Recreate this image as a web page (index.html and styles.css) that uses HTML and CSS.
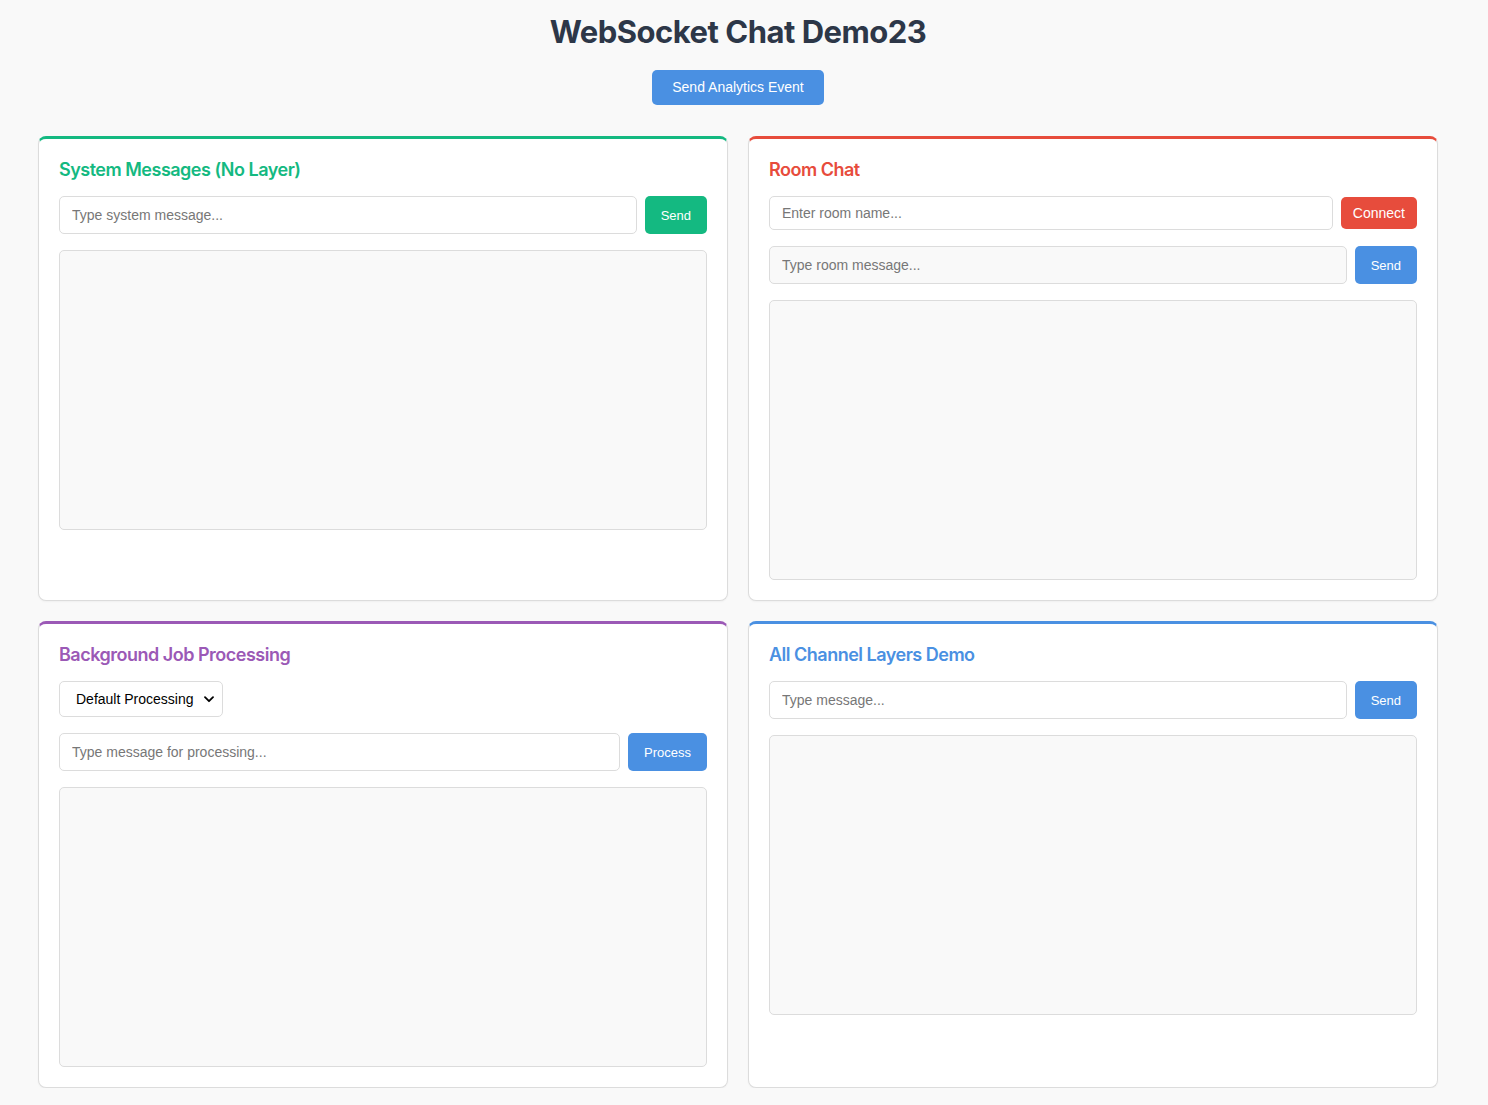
FILE: index.html
```html
<!DOCTYPE html>
<html>
<head>
<meta charset="utf-8">
<title>WebSocket Chat Demo23</title>
<link rel="stylesheet" href="styles.css">
</head>
<body>
<div class="page">
  <h1 class="title">WebSocket Chat Demo23</h1>
  <div class="top-actions">
    <button class="btn btn-blue btn-analytics">Send Analytics Event</button>
  </div>
  <div class="grid">
    <section class="card card-green">
      <h3 class="card-title">System Messages (No Layer)</h3>
      <div class="row">
        <input class="field" type="text" placeholder="Type system message...">
        <button class="btn btn-green btn-sm">Send</button>
      </div>
      <div class="messages"></div>
    </section>

    <section class="card card-red">
      <h3 class="card-title">Room Chat</h3>
      <div class="row row-center">
        <input class="field field-compact" type="text" placeholder="Enter room name...">
        <button class="btn btn-red btn-connect">Connect</button>
      </div>
      <div class="row">
        <input class="field field-disabled" type="text" placeholder="Type room message..." disabled>
        <button class="btn btn-blue btn-sm">Send</button>
      </div>
      <div class="messages"></div>
    </section>

    <section class="card card-purple">
      <h3 class="card-title">Background Job Processing</h3>
      <div class="select-row">
        <span class="select-wrap">
          <select class="select">
            <option>Default Processing</option>
          </select>
          <svg class="chevron" width="10" height="7" viewBox="0 0 10 7"><path d="M1 1.2 L5 5.2 L9 1.2" fill="none" stroke="#000" stroke-width="1.8" stroke-linecap="round" stroke-linejoin="round"/></svg>
        </span>
      </div>
      <div class="row">
        <input class="field" type="text" placeholder="Type message for processing...">
        <button class="btn btn-blue btn-sm">Process</button>
      </div>
      <div class="messages"></div>
    </section>

    <section class="card card-blue">
      <h3 class="card-title">All Channel Layers Demo</h3>
      <div class="row">
        <input class="field" type="text" placeholder="Type message...">
        <button class="btn btn-blue btn-sm">Send</button>
      </div>
      <div class="messages"></div>
    </section>
  </div>
</div>
</body>
</html>
```

FILE: styles.css
```css
* { box-sizing: border-box; }

html, body {
  margin: 0;
  padding: 0;
  background: #f9f9f9;
}

body {
  font-family: Inter, "Liberation Sans", Arial, sans-serif;
  color: #2d3748;
}

.page {
  width: 1400px;
  margin-left: 38px;
  padding-top: 12px;
}

.title {
  margin: 0;
  font-size: 31px;
  line-height: 40px;
  font-weight: 700;
  letter-spacing: -0.5px;
  text-align: center;
  color: #2d3748;
}

.top-actions {
  display: flex;
  justify-content: center;
  margin-top: 18px;
  margin-bottom: 31px;
}

.btn {
  border: none;
  border-radius: 5px;
  color: #fff;
  font-family: "Liberation Sans", Arial, sans-serif;
  cursor: pointer;
  white-space: nowrap;
}

.btn-analytics {
  font-size: 14px;
  line-height: 17px;
  height: 35px;
  padding: 0 20px;
}

.btn-blue { background: #4a90e2; }
.btn-green { background: #14b981; }
.btn-red { background: #e74c3c; }

.btn-sm {
  font-size: 13px;
  padding: 0 16px;
}

.btn-connect {
  font-size: 14px;
  height: 32px;
  padding: 0 12px;
}

.grid {
  display: grid;
  grid-template-columns: 1fr 1fr;
  gap: 20px;
}

.card {
  background: #fff;
  border: 1px solid #dcdcdc;
  border-top: 3px solid #14b981;
  border-radius: 8px;
  padding: 20px;
  box-shadow: 0 1px 2px rgba(0,0,0,0.04);
}

.card-green { border-top-color: #14b981; }
.card-red { border-top-color: #e74c3c; }
.card-purple { border-top-color: #9b59b6; }
.card-blue { border-top-color: #4a90e2; }

.card-title {
  margin: 0 0 15px;
  font-size: 18px;
  line-height: 22px;
  font-weight: 600;
  letter-spacing: -0.5px;
}

.card-green .card-title { color: #14b981; }
.card-red .card-title { color: #e74c3c; }
.card-purple .card-title { color: #9b59b6; }
.card-blue .card-title { color: #4a90e2; }

.row {
  display: flex;
  gap: 8px;
  margin-bottom: 16px;
}

.row-center { align-items: center; }

.field {
  flex: 1;
  min-width: 0;
  height: 38px;
  padding: 0 12px;
  border: 1px solid #dcdcdc;
  border-radius: 5px;
  background: #fff;
  font-family: "Liberation Sans", Arial, sans-serif;
  font-size: 14px;
  color: #333;
  outline: none;
}

.field::placeholder { color: #777; }

.field-compact { height: 34px; }

.field-disabled { background: #f9f9f9; }

.select-row {
  display: flex;
  margin-bottom: 16px;
}

.select-wrap {
  position: relative;
  display: inline-block;
}

.select {
  -webkit-appearance: none;
  appearance: none;
  width: 164px;
  height: 36px;
  padding: 0 12px 0 16px;
  border: 1px solid #dcdcdc;
  border-radius: 5px;
  background: #fff;
  font-family: "Liberation Sans", Arial, sans-serif;
  font-size: 14px;
  color: #000;
  outline: none;
}

.chevron {
  position: absolute;
  right: 9px;
  top: 15px;
  pointer-events: none;
}

.messages {
  height: 280px;
  background: #f9f9f9;
  border: 1px solid #dcdcdc;
  border-radius: 5px;
}
```
